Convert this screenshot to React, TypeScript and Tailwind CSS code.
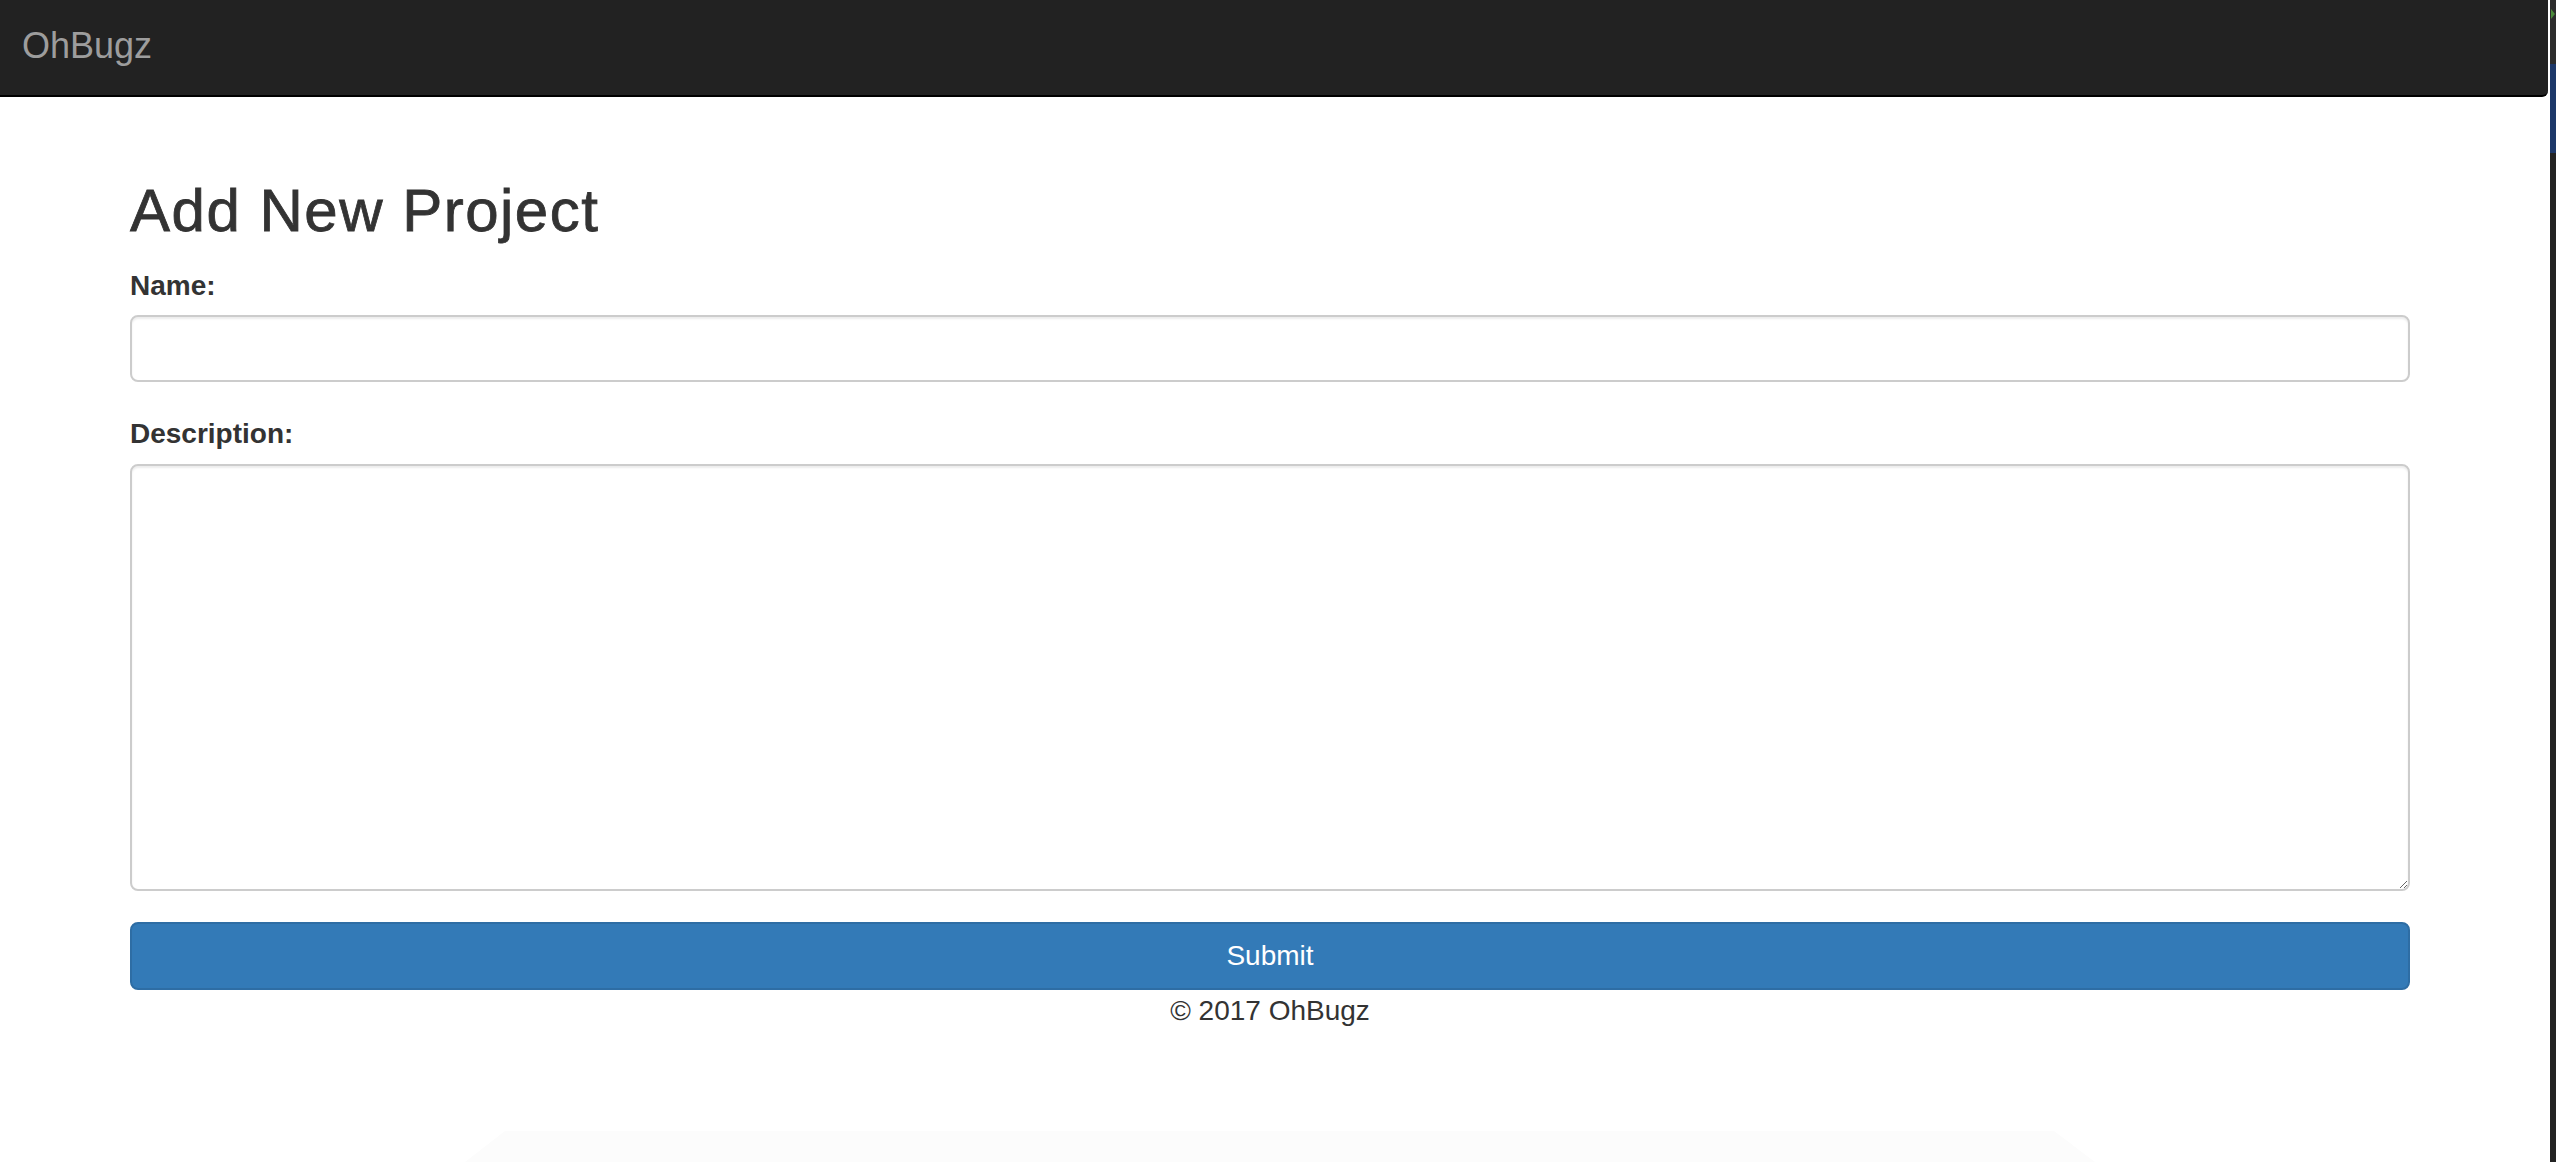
import React from "react";

export default function App() {
  const font = { fontFamily: '"Liberation Sans", Arial, Helvetica, sans-serif' };
  return (
    <div className="relative flex w-[2556px] h-[1162px] overflow-hidden bg-white" style={font}>
      <div className="flex-1 flex flex-col">
        <div className="h-[97px] mr-[2px] bg-[#222222] border-b-2 border-black rounded-br-[6px] flex items-center pl-[22px] pb-[4px]">
          <span className="text-[36px] leading-none text-[#9d9d9d]">OhBugz</span>
        </div>
        <div className="ml-[130px] w-[2280px] flex flex-col text-[#333333]">
          <h2 className="mt-[81px] text-[60px] leading-[66px] tracking-[1.5px] font-normal [-webkit-text-stroke:0.8px_#333333]">Add New Project</h2>
          <label className="mt-[26px] text-[28px] leading-[32px] font-bold">Name:</label>
          <input
            type="text"
            className="mt-[13px] h-[67px] w-full border-2 border-[#cccccc] rounded-[8px] bg-white shadow-[inset_0_2px_2px_rgba(0,0,0,0.075)] outline-none px-[24px] text-[28px]"
          />
          <label className="mt-[36px] text-[28px] leading-[32px] font-bold">Description:</label>
          <textarea className="mt-[14px] h-[427px] w-full border-2 border-[#cccccc] rounded-[8px] bg-white shadow-[inset_0_2px_2px_rgba(0,0,0,0.075)] outline-none px-[24px] py-[12px] text-[28px]" />
          <button className="mt-[31px] h-[68px] w-full rounded-[8px] border-2 border-[#2e6da4] bg-[#337ab7] text-white text-[28px] leading-[32px]">
            Submit
          </button>
          <div className="mt-[5px] text-center text-[28px] leading-[32px] text-[#333333]">© 2017 OhBugz</div>
        </div>
      </div>
      <div className="w-[6px] flex flex-col bg-[#232323]">
        <div className="h-[64px] bg-[#2c2c2c] flex flex-col">
          <div className="mt-[9px] ml-[1px] w-0 h-0 border-y-[5px] border-y-transparent border-l-[4px] border-l-[#4a8a3a]" />
        </div>
        <div className="h-[89px] bg-[#1d3869]" />
      </div>
      <div
        className="absolute bottom-0 left-[465px] w-[1630px] h-[31px] bg-[#fcfcfc]"
        style={{ clipPath: "polygon(40px 0, 1589px 0, 100% 100%, 0 100%)" }}
      />
    </div>
  );
}
